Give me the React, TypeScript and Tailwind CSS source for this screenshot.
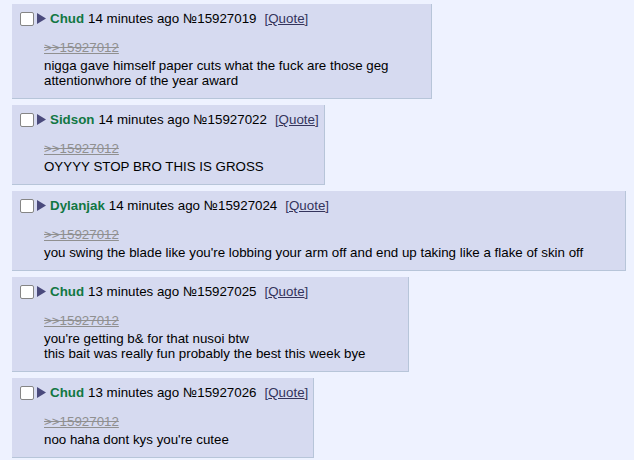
import React from "react";

type Post = {
  name: string;
  time: string;
  no: string;
  lines: string[];
};

const posts: Post[] = [
  {
    name: "Chud",
    time: "14 minutes ago",
    no: "15927019",
    lines: ["nigga gave himself paper cuts what the fuck are those geg", "attentionwhore of the year award"],
  },
  {
    name: "Sidson",
    time: "14 minutes ago",
    no: "15927022",
    lines: ["OYYYY STOP BRO THIS IS GROSS"],
  },
  {
    name: "Dylanjak",
    time: "14 minutes ago",
    no: "15927024",
    lines: ["you swing the blade like you're lobbing your arm off and end up taking like a flake of skin off"],
  },
  {
    name: "Chud",
    time: "13 minutes ago",
    no: "15927025",
    lines: ["you're getting b& for that nusoi btw", "this bait was really fun probably the best this week bye"],
  },
  {
    name: "Chud",
    time: "13 minutes ago",
    no: "15927026",
    lines: ["noo haha dont kys you're cutee"],
  },
];

function Reply({ post }: { post: Post }) {
  return (
    <div className="bg-[#d6daf0] border-r border-b border-[#b7c5d9] p-[2px]">
      <div className="flex items-center h-[25px] pr-[3px] whitespace-nowrap">
        <span className="ml-[6px] w-[14px] h-[14px] border border-[#858585] rounded-[2px] bg-white" />
        <svg width="9" height="11" viewBox="0 0 9 11" className="ml-[3px]">
          <path d="M0 0 L9 5.5 L0 11 Z" fill="#4a4a7c" />
        </svg>
        <span className="ml-[4px] font-bold text-[#117743]">{post.name}</span>
        <span className="ml-[4px]">
          {post.time} №{post.no}
        </span>
        <span className="ml-[8px] text-[#34345c]">
          [<span className="underline">Quote</span>]
        </span>
      </div>
      <div className="mt-[9px] mb-[8px] ml-[30px] mr-[40px]">
        <div className="mb-[3px] text-[#909090] [text-decoration-line:underline_line-through]">&gt;&gt;15927012</div>
        {post.lines.map((l, i) => (
          <div key={i} className="whitespace-nowrap">
            {l}
          </div>
        ))}
      </div>
    </div>
  );
}

export default function App() {
  return (
    <div
      className="min-h-screen bg-[#eef2ff] pt-[4px] pl-[12px] text-[13.33px] leading-[15px] text-black"
      style={{ fontFamily: '"Liberation Sans", Arial, sans-serif' }}
    >
      <div className="flex flex-col items-start gap-[6px]">
        {posts.map((p) => (
          <Reply key={p.no} post={p} />
        ))}
      </div>
    </div>
  );
}
